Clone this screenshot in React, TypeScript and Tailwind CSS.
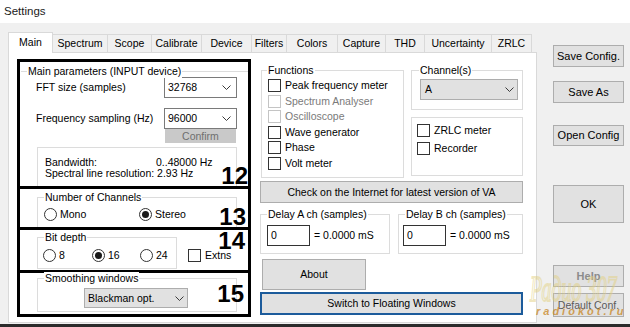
import React from "react";

const Chevron = () => (
  <svg width="9" height="5" viewBox="0 0 9 5" className="shrink-0">
    <polyline points="0.5,0.5 4.5,4.5 8.5,0.5" fill="none" stroke="#3a3a3a" strokeWidth="1" />
  </svg>
);

type GroupProps = {
  label?: string;
  className: string;
  labelClass?: string;
  children?: React.ReactNode;
};

function Group({ label, className, labelClass = "left-[6px]", children }: GroupProps) {
  return (
    <div className={`relative border-[#dcdcdc] ${className}`}>
      {label && (
        <span
          className={`absolute -top-[7px] ${labelClass} bg-white px-px leading-[13px] whitespace-nowrap`}
        >
          {label}
        </span>
      )}
      {children}
    </div>
  );
}

function Select({ value, gray, className }: { value: string; gray?: boolean; className: string }) {
  return (
    <div
      className={`flex items-center justify-between border ${
        gray ? "bg-[#e1e1e1] border-[#adadad]" : "bg-white border-[#7a7a7a]"
      } ${className}`}
    >
      <span>{value}</span>
      <Chevron />
    </div>
  );
}

function Check({ label, disabled, className = "" }: { label: string; disabled?: boolean; className?: string }) {
  return (
    <div className={`flex items-center ${className}`}>
      <span
        className={`block w-[13px] h-[13px] border bg-white shrink-0 ${
          disabled ? "border-[#c4c4c4]" : "border-[#333333]"
        }`}
      />
      <span className={`ml-[4px] whitespace-nowrap ${disabled ? "text-[#7a7a7a]" : ""}`}>{label}</span>
    </div>
  );
}

function Radio({ label, checked, className = "" }: { label: string; checked?: boolean; className?: string }) {
  return (
    <div className={`flex items-center ${className}`}>
      <span className="flex items-center justify-center w-[13px] h-[13px] rounded-full border border-[#333333] bg-white shrink-0">
        {checked && <span className="block w-[7px] h-[7px] rounded-full bg-[#1a1a1a]" />}
      </span>
      <span className="ml-[3px]">{label}</span>
    </div>
  );
}

function Btn({ children, className }: { children: React.ReactNode; className: string }) {
  return (
    <button
      type="button"
      className={`flex items-center justify-center bg-[#e1e1e1] border border-[#adadad] leading-[13px] whitespace-nowrap ${className}`}
    >
      {children}
    </button>
  );
}

const tabs: { name: string; w: string }[] = [
  { name: "Spectrum", w: "w-[55px]" },
  { name: "Scope", w: "w-[44px]" },
  { name: "Calibrate", w: "w-[50px]" },
  { name: "Device", w: "w-[50px]" },
  { name: "Filters", w: "w-[35px]" },
  { name: "Colors", w: "w-[51px]" },
  { name: "Capture", w: "w-[48px]" },
  { name: "THD", w: "w-[39px]" },
  { name: "Uncertainty", w: "w-[67px]" },
  { name: "ZRLC", w: "w-[40px]" },
];

const Num = ({ n, className }: { n: string; className: string }) => (
  <span className={`absolute text-[24px] leading-[20px] font-bold text-black ${className}`}>{n}</span>
);

export default function App() {
  return (
    <div className="relative w-[630px] h-[327px] overflow-hidden flex flex-col bg-[#f0f0f0] text-black text-[10.5px] leading-[13px] font-['Liberation_Sans',Arial,sans-serif]">
      {/* title bar */}
      <div className="h-[23px] bg-white flex items-center pl-[4px] text-[11.5px] text-[#1a1a1a]">Settings</div>

      {/* body */}
      <div className="flex-1 flex">
        {/* tab control */}
        <div className="ml-[8px] mt-[9px] w-[529px] h-[291px] flex flex-col">
          <div className="h-[21px] flex items-end relative z-10 -mb-px">
            <div className="w-[45px] h-[21px] bg-white border-t border-l border-r border-[#d9d9d9] flex items-start justify-center pt-[3px]">
              Main
            </div>
            {tabs.map((t) => (
              <div
                key={t.name}
                className={`${t.w} h-[19px] border-t border-r border-b border-[#d9d9d9] bg-[#f0f0f0] flex items-center justify-center whitespace-nowrap`}
              >
                {t.name}
              </div>
            ))}
          </div>

          {/* page */}
          <div className="flex-1 bg-white border border-[#d9d9d9] flex pl-[8px] pt-[6px]">
            {/* left annotated column */}
            <div className="w-[234px] flex flex-col">
              {/* box 12 */}
              <div className="relative h-[130px] border-[3px] border-black flex flex-col">
                <Group
                  label="Main parameters (INPUT device)"
                  className="mt-[9px] ml-px border-t flex-1 flex flex-col pl-[15px]"
                >
                  <div className="mt-[5px] h-[21px] flex items-center">
                    <span className="w-[128px]">FFT size (samples)</span>
                    <Select value="32768" className="w-[73px] h-[21px] pl-[3px] pr-[5px]" />
                  </div>
                  <div className="mt-[10px] h-[21px] flex items-center">
                    <span className="w-[128px]">Frequency sampling (Hz)</span>
                    <Select value="96000" className="w-[73px] h-[21px] pl-[3px] pr-[5px]" />
                  </div>
                  <div className="ml-[129px] w-[71px] h-[14px] bg-[#c9c9c9] text-[#6f6f6f] flex items-center justify-center leading-[14px]">
                    Confirm
                  </div>
                  <Group className="mt-[4px] ml-px w-[200px] flex-1 border-t border-l border-r pl-[7px] pt-[9px] leading-[11px]">
                    <div className="flex">
                      <span className="w-[111px]">Bandwidth:</span>
                      <span>0..48000 Hz</span>
                    </div>
                    <div className="whitespace-nowrap">Spectral line resolution: 2.93 Hz</div>
                  </Group>
                </Group>
                <Num n="12" className="top-[104px] right-0" />
              </div>

              {/* box 13 */}
              <div className="relative h-[44px] -mt-[3px] border-[3px] border-black flex flex-col">
                <Group
                  label="Number of Channels"
                  className="ml-[17px] mt-[8px] w-[200px] flex-1 border-t border-l border-r"
                >
                  <div className="mt-[9px] h-[14px] flex items-center pl-[6px]">
                    <Radio label="Mono" className="w-[95px]" />
                    <Radio label="Stereo" checked />
                  </div>
                </Group>
                <Num n="13" className="top-[18px] right-[2px]" />
              </div>

              {/* box 14 */}
              <div className="relative h-[46px] -mt-[3px] border-[3px] border-black flex items-start">
                <Group label="Bit depth" className="ml-[17px] mt-[7px] w-[140px] h-[32px] border">
                  <div className="mt-[10px] h-[14px] flex items-center pl-[5px]">
                    <Radio label="8" className="w-[49px]" />
                    <Radio label="16" checked className="w-[48px]" />
                    <Radio label="24" />
                  </div>
                </Group>
                <Check label="Extns" className="ml-[11px] mt-[19px]" />
                <Num n="14" className="top-[1px] right-[3px]" />
              </div>

              {/* box 15 */}
              <div className="relative h-[47px] -mt-[3px] border-[3px] border-black flex items-start">
                <Group label="Smoothing windows" className="ml-[17px] mt-[5px] w-[200px] h-[34px] border">
                  <Select
                    value="Blackman opt."
                    gray
                    className="ml-[46px] mt-[9px] w-[104px] h-[20px] pl-[3px] pr-[3px]"
                  />
                </Group>
                <Num n="15" className="top-[11px] right-[4px]" />
              </div>
            </div>

            {/* middle column */}
            <div className="ml-[9px] mt-[11px] w-[263px] flex flex-col">
              <div className="flex h-[108px]">
                <Group
                  label="Functions"
                  labelClass="left-[5px]"
                  className="ml-px w-[143px] h-[108px] border pt-[7px] pl-[6px]"
                >
                  <Check label="Peak frequency meter" className="h-[15.5px]" />
                  <Check label="Spectrum Analyser" disabled className="h-[15.5px]" />
                  <Check label="Oscilloscope" disabled className="h-[15.5px]" />
                  <Check label="Wave generator" className="h-[15.5px]" />
                  <Check label="Phase" className="h-[15.5px]" />
                  <Check label="Volt meter" className="h-[15.5px]" />
                </Group>
                <div className="ml-[7px] w-[112px] flex flex-col">
                  <Group label="Channel(s)" labelClass="left-[7px]" className="h-[40px] border">
                    <Select value="A" gray className="ml-[8px] mt-[8px] w-[98px] h-[21px] pl-[4px] pr-[3px]" />
                  </Group>
                  <Group className="mt-[7px] h-[59px] border pt-[3px] pl-[5px]">
                    <Check label="ZRLC meter" className="h-[18px]" />
                    <Check label="Recorder" className="h-[18px]" />
                  </Group>
                </div>
              </div>

              <Btn className="mt-[3px] h-[22px] w-[263px]">Check on the Internet for latest version of VA</Btn>

              <div className="mt-[11px] flex">
                <Group
                  label="Delay A ch (samples)"
                  labelClass="left-[6px]"
                  className="w-[130px] h-[40px] border flex items-start pt-[10px] pl-[6px]"
                >
                  <div className="w-[43px] h-[21px] border border-[#333333] bg-white pl-[3px] flex items-center">0</div>
                  <span className="ml-[4px] mt-[4px]">= 0.0000 mS</span>
                </Group>
                <Group
                  label="Delay B ch (samples)"
                  labelClass="left-[6px]"
                  className="ml-[8px] w-[125px] h-[40px] border flex items-start pt-[10px] pl-[4px]"
                >
                  <div className="w-[43px] h-[21px] border border-[#333333] bg-white pl-[3px] flex items-center">0</div>
                  <span className="ml-[4px] mt-[4px]">= 0.0000 mS</span>
                </Group>
              </div>

              <Btn className="mt-[5px] ml-[2px] w-[104px] h-[31px]">About</Btn>
              <button
                type="button"
                className="mt-[2px] w-[263px] h-[23px] bg-[#e1e1e1] border-2 border-[#1c5b9b] flex items-center justify-center leading-[13px]"
              >
                Switch to Floating Windows
              </button>
            </div>
          </div>
        </div>

        {/* right buttons */}
        <div className="ml-[16px] w-[71px] flex flex-col text-[11px]">
          <Btn className="mt-[22px] h-[22px] w-[71px]">Save Config.</Btn>
          <Btn className="mt-[14px] h-[22px] w-[71px]">Save As</Btn>
          <Btn className="mt-[22px] h-[21px] w-[71px]">Open Config</Btn>
          <Btn className="mt-[39px] h-[38px] w-[71px]">OK</Btn>
          <Btn className="mt-[42px] h-[22px] w-[71px] font-bold text-[#8c8c8c]">Help</Btn>
          <Btn className="mt-[6px] h-[24px] w-[71px] text-[10.5px] text-[#5a5a5a]">Default Conf.</Btn>
        </div>
      </div>

      <div className="h-[3px] bg-[#2b2b2b]" />

      {/* watermark overlay */}
      <span className="absolute left-[530px] top-[270px] origin-top-left scale-y-[1.8] text-[20px] leading-none italic font-['Liberation_Serif',serif] text-transparent [-webkit-text-stroke:1px_rgba(226,208,130,0.5)] pointer-events-none whitespace-nowrap">
        Радио 307
      </span>
      <span className="absolute left-[536px] top-[306px] text-[11px] leading-none italic font-bold tracking-[3px] text-[#c98a2c]/80 pointer-events-none whitespace-nowrap">
        radiokot.ru
      </span>
    </div>
  );
}
